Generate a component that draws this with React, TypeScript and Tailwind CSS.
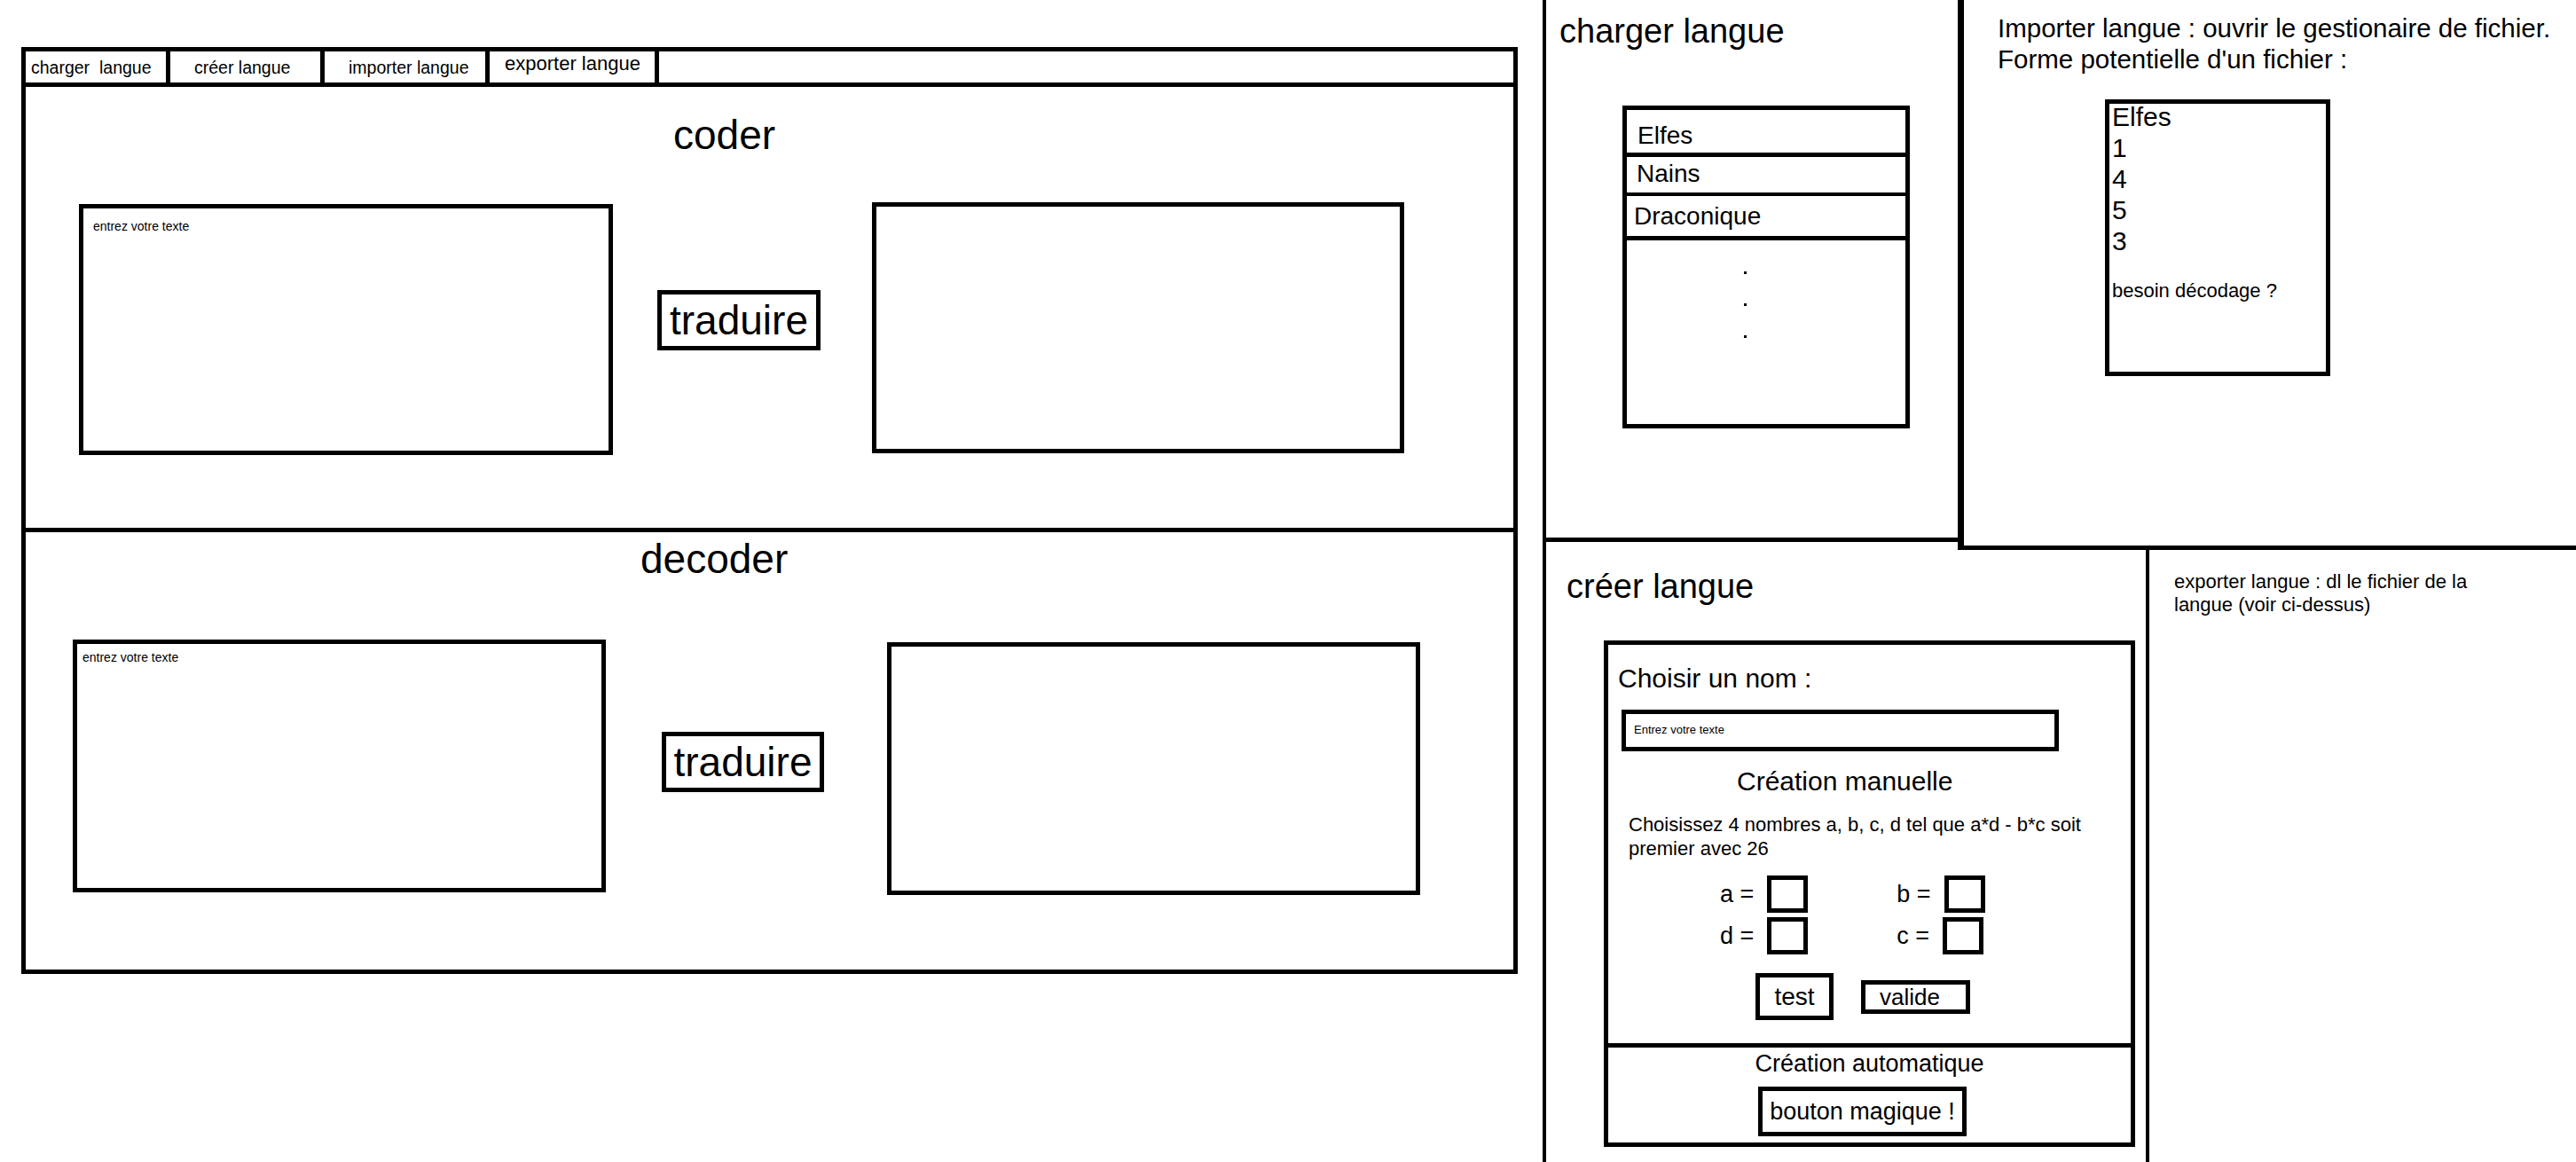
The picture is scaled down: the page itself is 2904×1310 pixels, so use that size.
import React from "react";

const tabs = [
  { label: "charger\u00a0\u00a0langue", w: "w-[163px]", cls: "pl-[6px] items-center text-[19.5px]" },
  { label: "créer langue", w: "w-[174px]", cls: "pl-[27px] items-center text-[19.5px]" },
  { label: "importer langue", w: "w-[186px]", cls: "pl-[27px] items-center text-[19.5px]" },
  { label: "exporter langue", w: "w-[191px]", cls: "pl-[17px] pt-[3px] items-start text-[22px]" },
];

function TabBar() {
  return (
    <div className="flex w-[1687px] h-[45px] border-[5px] border-black">
      {tabs.map((t) => (
        <div key={t.label} className={`flex h-full border-r-[5px] border-black leading-[22px] ${t.w} ${t.cls}`}>
          {t.label}
        </div>
      ))}
    </div>
  );
}

function Traduire({ w }: { w: string }) {
  return (
    <div className={`flex h-[68px] items-center justify-center border-[5px] border-black text-[46px] leading-[53px] ${w}`}>
      traduire
    </div>
  );
}

function CoderPanel() {
  return (
    <div className="w-[1687px] h-[502px] border-x-[5px] border-b-[5px] border-black">
      <div className="ml-[730px] pt-[28px] text-[46px] leading-[53px]">coder</div>
      <div className="mt-[49px] flex items-start">
        <div className="ml-[60px] mt-[2px] w-[602px] h-[283px] border-[5px] border-black pl-[11px] pt-[12px] text-[14px] leading-[16px]">
          entrez votre texte
        </div>
        <div className="ml-[50px] mt-[99px]">
          <Traduire w="w-[184px]" />
        </div>
        <div className="ml-[58px] w-[600px] h-[283px] border-[5px] border-black" />
      </div>
    </div>
  );
}

function DecoderPanel() {
  return (
    <div className="w-[1687px] h-[498px] border-x-[5px] border-b-[5px] border-black">
      <div className="ml-[693px] pt-[4px] text-[46px] leading-[53px]">decoder</div>
      <div className="mt-[64px] flex items-start">
        <div className="ml-[53px] w-[601px] h-[285px] border-[5px] border-black pl-[6px] pt-[7px] text-[14px] leading-[16px]">
          entrez votre texte
        </div>
        <div className="ml-[63px] mt-[104px]">
          <Traduire w="w-[183px]" />
        </div>
        <div className="ml-[71px] mt-[3px] w-[601px] h-[285px] border-[5px] border-black" />
      </div>
    </div>
  );
}

function ChargerCell() {
  return (
    <div className="w-[464px] h-[611px] shrink-0 border-b-[5px] border-black">
      <div className="pl-[15px] pt-[13px] text-[38px] leading-[44px]">charger langue</div>
      <div className="ml-[86px] mt-[62px] flex w-[324px] h-[364px] flex-col border-[5px] border-black text-[28px] leading-[32px]">
        <div className="h-[53px] border-b-[5px] border-black pl-[12px] pt-[13px]">Elfes</div>
        <div className="h-[44px] border-b-[4px] border-black pl-[11px] pt-[3px]">Nains</div>
        <div className="h-[50px] border-b-[5px] border-black pl-[8px] pt-[7px]">Draconique</div>
        <div className="flex flex-col gap-[33px] pl-[132px] pt-[35px]">
          <div className="w-[3px] h-[3px] bg-black" />
          <div className="w-[3px] h-[3px] bg-black" />
          <div className="w-[3px] h-[3px] bg-black" />
        </div>
      </div>
    </div>
  );
}

function ImporterCell() {
  return (
    <div className="flex-1 h-[620px] border-l-[7px] border-b-[5px] border-black">
      <div className="pl-[38px] pt-[14px] text-[29.5px] leading-[35px]">
        Importer langue : ouvrir le gestionaire de fichier.
        <br />
        Forme potentielle d'un fichier :
      </div>
      <div className="ml-[159px] mt-[28px] w-[254px] h-[312px] border-[5px] border-black pl-[3px]">
        <div className="-mt-[3px] text-[30px] leading-[35px]">
          <div>Elfes</div>
          <div>1</div>
          <div>4</div>
          <div>5</div>
          <div>3</div>
        </div>
        <div className="mt-[26px] text-[22px] leading-[25px]">besoin décodage ?</div>
      </div>
    </div>
  );
}

function Field({ label }: { label: string }) {
  return (
    <div className="flex items-center gap-[15px]">
      <span className="whitespace-nowrap text-[27px] leading-none">{label}</span>
      <div className="w-[46px] h-[42px] border-[5px] border-black" />
    </div>
  );
}

function CreerCell() {
  return (
    <div className="w-[680px] h-full shrink-0 border-r-[4px] border-black pl-[23px] pt-[19px]">
      <div className="text-[38px] leading-[44px]">créer langue</div>
      <div className="ml-[42px] mt-[39px] flex w-[599px] h-[571px] flex-col border-[5px] border-black">
        <div className="h-[449px] shrink-0">
          <div className="ml-[11px] pt-[21px] text-[30px] leading-[34px]">Choisir un nom :</div>
          <div className="ml-[15px] mt-[18px] w-[493px] h-[47px] border-[5px] border-black pl-[9px] pt-[10px] text-[13px] leading-[15px]">
            Entrez votre texte
          </div>
          <div className="ml-[145px] mt-[17px] text-[30px] leading-[34px]">Création manuelle</div>
          <div className="ml-[23px] mt-[18px] text-[22px] leading-[27px]">
            Choisissez 4 nombres a, b, c, d tel que a*d - b*c soit
            <br />
            premier avec 26
          </div>
          <div className="ml-[126px] mt-[17px] flex flex-col gap-[5px]">
            <div className="flex gap-[100px]">
              <Field label="a =" />
              <Field label="b =" />
            </div>
            <div className="flex gap-[100px]">
              <Field label="d =" />
              <Field label="c =" />
            </div>
          </div>
          <div className="ml-[166px] mt-[21px] flex items-center gap-[31px]">
            <div className="flex w-[88px] h-[53px] items-center justify-center border-[5px] border-black text-[28px] leading-[32px]">
              test
            </div>
            <div className="flex w-[123px] h-[38px] items-center border-[5px] border-black pl-[16px] text-[26px] leading-[28px]">
              valide
            </div>
          </div>
        </div>
        <div className="flex flex-1 flex-col items-center border-t-[5px] border-black">
          <div className="pt-[3px] text-[27px] leading-[31px]">Création automatique</div>
          <div className="mt-[10px] mr-[16px] flex w-[235px] h-[56px] items-center justify-center border-[5px] border-black text-[27px] leading-[31px]">
            bouton magique !
          </div>
        </div>
      </div>
    </div>
  );
}

export default function App() {
  return (
    <div className="flex w-[2904px] h-[1310px] overflow-hidden bg-white text-black font-['Liberation_Sans',Arial,sans-serif]">
      <div className="w-[1739px] shrink-0 pl-[24px] pt-[53px]">
        <TabBar />
        <CoderPanel />
        <DecoderPanel />
      </div>
      <div className="flex flex-1 flex-col border-l-[4px] border-black">
        <div className="flex items-start">
          <ChargerCell />
          <ImporterCell />
        </div>
        <div className="flex flex-1">
          <CreerCell />
          <div className="flex-1 pl-[28px] pt-[23px] text-[22px] leading-[26px]">
            exporter langue : dl le fichier de la
            <br />
            langue (voir ci-dessus)
          </div>
        </div>
      </div>
    </div>
  );
}
